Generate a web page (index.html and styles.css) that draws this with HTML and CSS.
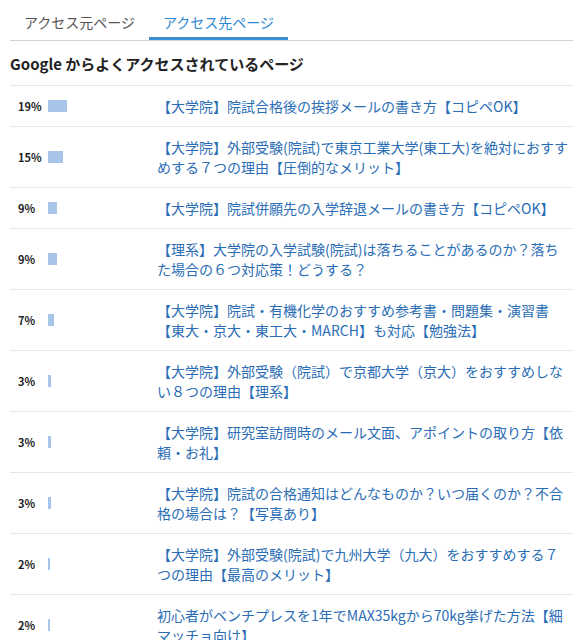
FILE: index.html
```html
<!DOCTYPE html>
<html lang="ja">
<head>
<meta charset="utf-8">
<title>アクセス先ページ</title>
<link rel="stylesheet" href="styles.css">
</head>
<body>
<div class="panel">
  <nav class="tabs">
    <a class="tab" href="#">アクセス元ページ</a>
    <a class="tab is-active" href="#">アクセス先ページ</a>
  </nav>
  <h2 class="panel-title">Google からよくアクセスされているページ</h2>
  <ul class="rank-list">
    <li class="rank-row">
      <span class="rank-pct">19%</span>
      <span class="bar-track"><span class="bar" style="width:19%"></span></span>
      <a class="rank-link" href="#">【大学院】院試合格後の挨拶メールの書き方【コピペOK】</a>
    </li>
    <li class="rank-row">
      <span class="rank-pct">15%</span>
      <span class="bar-track"><span class="bar" style="width:15%"></span></span>
      <a class="rank-link" href="#">【大学院】外部受験(院試)で東京工業大学(東工大)を絶対におすすめする７つの理由【圧倒的なメリット】</a>
    </li>
    <li class="rank-row">
      <span class="rank-pct">9%</span>
      <span class="bar-track"><span class="bar" style="width:9%"></span></span>
      <a class="rank-link" href="#">【大学院】院試併願先の入学辞退メールの書き方【コピペOK】</a>
    </li>
    <li class="rank-row">
      <span class="rank-pct">9%</span>
      <span class="bar-track"><span class="bar" style="width:9%"></span></span>
      <a class="rank-link" href="#">【理系】大学院の入学試験(院試)は落ちることがあるのか？落ちた場合の６つ対応策！どうする？</a>
    </li>
    <li class="rank-row">
      <span class="rank-pct">7%</span>
      <span class="bar-track"><span class="bar" style="width:6%"></span></span>
      <a class="rank-link" href="#">【大学院】院試・有機化学のおすすめ参考書・問題集・演習書【東大・京大・東工大・MARCH】も対応【勉強法】</a>
    </li>
    <li class="rank-row">
      <span class="rank-pct">3%</span>
      <span class="bar-track"><span class="bar" style="width:3%"></span></span>
      <a class="rank-link" href="#">【大学院】外部受験（院試）で京都大学（京大）をおすすめしない８つの理由【理系】</a>
    </li>
    <li class="rank-row">
      <span class="rank-pct">3%</span>
      <span class="bar-track"><span class="bar" style="width:3%"></span></span>
      <a class="rank-link" href="#">【大学院】研究室訪問時のメール文面、アポイントの取り方【依頼・お礼】</a>
    </li>
    <li class="rank-row">
      <span class="rank-pct">3%</span>
      <span class="bar-track"><span class="bar" style="width:3%"></span></span>
      <a class="rank-link" href="#">【大学院】院試の合格通知はどんなものか？いつ届くのか？不合格の場合は？【写真あり】</a>
    </li>
    <li class="rank-row">
      <span class="rank-pct">2%</span>
      <span class="bar-track"><span class="bar" style="width:2%"></span></span>
      <a class="rank-link" href="#">【大学院】外部受験(院試)で九州大学（九大）をおすすめする７つの理由【最高のメリット】</a>
    </li>
    <li class="rank-row">
      <span class="rank-pct">2%</span>
      <span class="bar-track"><span class="bar" style="width:2%"></span></span>
      <a class="rank-link" href="#">初心者がベンチプレスを1年でMAX35kgから70kg挙げた方法【細マッチョ向け】</a>
    </li>
  </ul>
</div>
</body>
</html>
```

FILE: styles.css
```css
html, body {
  margin: 0;
  padding: 0;
  background: #fff;
}

body {
  font-family: "Noto Sans CJK JP", "Noto Sans", sans-serif;
  color: #222;
}

.panel {
  margin-left: 10px;
  width: 563px;
}

/* tab strip */
.tabs {
  display: flex;
  border-bottom: 1px solid #cfd3d6;
}

.tab {
  padding: 12px 14px 5px;
  font-size: 14px;
  line-height: 20px;
  color: #555;
  text-decoration: none;
  border-bottom: 3px solid transparent;
}

.tab.is-active {
  color: #2b88d3;
  border-bottom-color: #3a8fd2;
}

/* section heading */
.panel-title {
  margin: 0;
  padding: 12px 0 10px;
  font-size: 15px;
  line-height: 22px;
  font-weight: bold;
  color: #222;
  border-bottom: 1px solid #e4e6e8;
}

/* ranking rows */
.rank-list {
  list-style: none;
  margin: 0;
  padding: 0;
}

.rank-row {
  display: grid;
  grid-template-columns: 30px 109px 1fr;
  align-items: center;
  padding: 10px 4px 10px 8px;
  border-bottom: 1px solid #e4e6e8;
}

.rank-pct {
  font-size: 11px;
  font-weight: bold;
  color: #222;
  line-height: 14px;
}

.bar-track {
  display: block;
  width: 100px;
  height: 12px;
}

.bar {
  display: block;
  height: 12px;
  background: #a6c5e9;
}

.rank-link {
  font-size: 14px;
  line-height: 20px;
  color: #2a6db5;
  text-decoration: none;
}
```
